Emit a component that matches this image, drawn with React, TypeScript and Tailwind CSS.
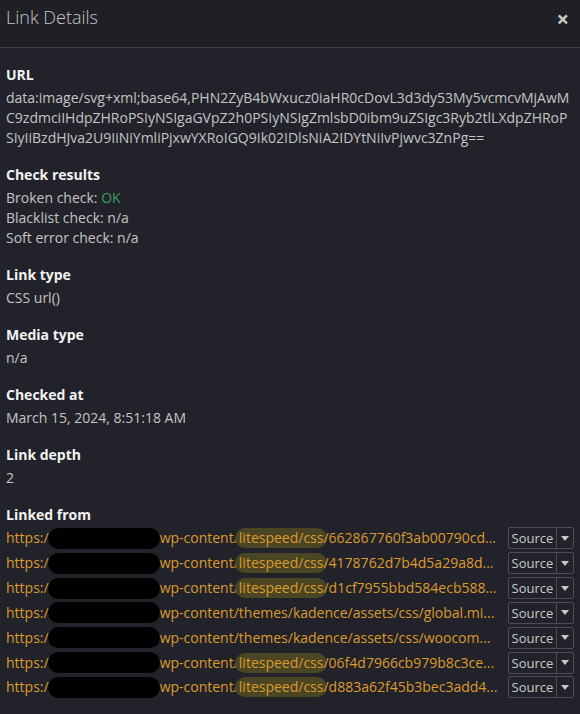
import React from 'react';

const links = [
  { mid: 'wp-content/', hl: 'litespeed/css', tail: '/662867760f3ab00790cd...' },
  { mid: 'wp-content/', hl: 'litespeed/css', tail: '/4178762d7b4d5a29a8d...' },
  { mid: 'wp-content/', hl: 'litespeed/css', tail: '/d1cf7955bbd584ecb588...' },
  { mid: 'wp-content/themes/kadence/assets/css/global.mi...', hl: '', tail: '' },
  { mid: 'wp-content/themes/kadence/assets/css/woocom...', hl: '', tail: '' },
  { mid: 'wp-content/', hl: 'litespeed/css', tail: '/06f4d7966cb979b8c3ce...' },
  { mid: 'wp-content/', hl: 'litespeed/css', tail: '/d883a62f45b3bec3add4...' },
];

const Section = ({ label, children }: { label: string; children: React.ReactNode }) => (
  <div className="mb-[17px]">
    <div className="font-bold text-[#f2f2f2]">{label}</div>
    <div className="mt-[3px] text-[#c4c4c4]">{children}</div>
  </div>
);

export default function App() {
  return (
    <div
      className="w-[580px] h-[714px] bg-[#22232a] text-[14px] leading-[20px] overflow-hidden"
      style={{ fontFamily: '"Open Sans", "Noto Sans", sans-serif' }}
    >
      {/* header */}
      <div className="h-[48px] bg-[#1f2025] border-b border-[#3b3e47] flex items-start justify-between px-[6px] pt-[4px]">
        <h1 className="text-[18px] leading-[26px] font-light text-[#c6c6c6]">Link Details</h1>
        <span className="text-[22px] leading-[26px] font-bold text-[#c8c8c8] mr-[5px] mt-[1px]">×</span>
      </div>

      <div className="px-[6px] pt-[17px]">
        <Section label="URL">
          <div className="break-all">
            data:image/svg+xml;base64,PHN2ZyB4bWxucz0iaHR0cDovL3d3dy53My5vcmcvMjAwM
            <br />
            C9zdmciIHdpZHRoPSIyNSIgaGVpZ2h0PSIyNSIgZmlsbD0ibm9uZSIgc3Ryb2tlLXdpZHRoP
            <br />
            SIyIiBzdHJva2U9IiNiYmliPjxwYXRoIGQ9Ik02IDlsNiA2IDYtNiIvPjwvc3ZnPg==
          </div>
        </Section>

        <Section label="Check results">
          <div>
            Broken check: <span className="text-[#3f9e62]">OK</span>
          </div>
          <div>Blacklist check: n/a</div>
          <div>Soft error check: n/a</div>
        </Section>

        <Section label="Link type">CSS url()</Section>
        <Section label="Media type">n/a</Section>
        <Section label="Checked at">March 15, 2024, 8:51:18 AM</Section>
        <Section label="Link depth">2</Section>

        <div className="font-bold text-[#f2f2f2]">Linked from</div>
        <div className="mt-[1px] flex flex-col">
          {links.map((l, i) => (
            <div key={i} className="h-[24.85px] flex items-center">
              <div className="flex-1 flex items-center whitespace-nowrap overflow-hidden text-[#dc9a2c]">
                <span>https:/</span>
                <span className="inline-block w-[112px] h-[21px] bg-black rounded-full -ml-[1px] shrink-0" />
                <span>{l.mid}</span>
                {l.hl && (
                  <span className="bg-[#4a4624] rounded-full -mx-[4px] px-[4px]">{l.hl}</span>
                )}
                <span>{l.tail}</span>
              </div>
              <div className="flex h-[22px] border border-[#4b4e57] rounded-[2px] text-[13px] text-[#c8c8c8] shrink-0">
                <span className="w-[47px] flex items-center justify-center">Source</span>
                <span className="w-[17px] border-l border-[#4b4e57] flex items-center justify-center">
                  <svg width="8" height="5" viewBox="0 0 8 5">
                    <path d="M0 0h8L4 5z" fill="#c8c8c8" />
                  </svg>
                </span>
              </div>
            </div>
          ))}
        </div>
      </div>
    </div>
  );
}
